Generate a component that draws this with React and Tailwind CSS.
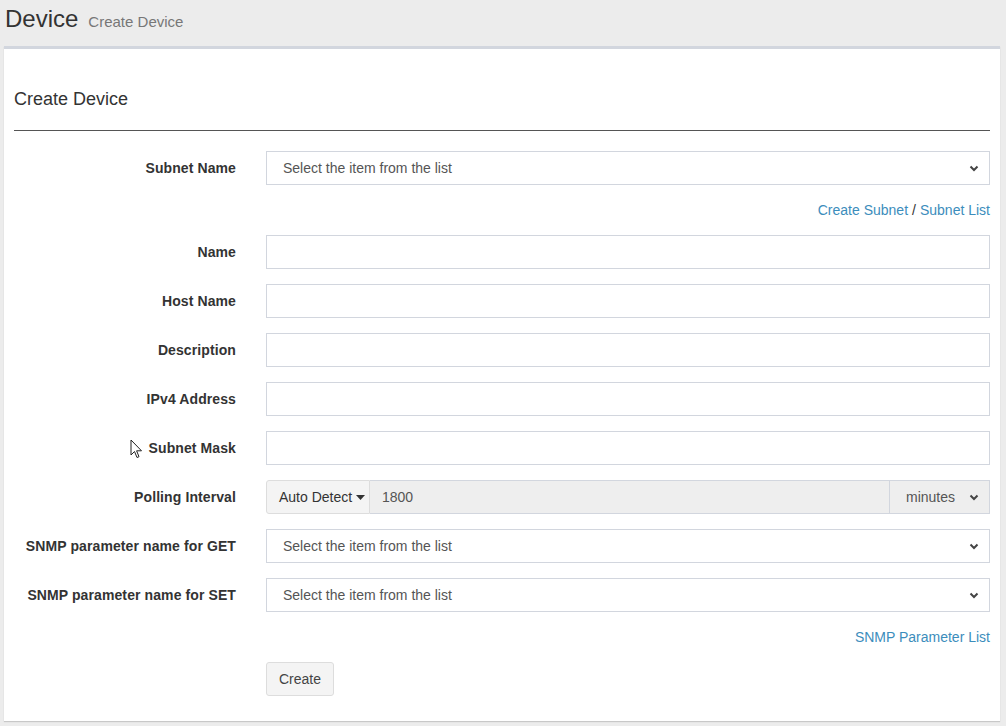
import React from 'react';

const Chevron = () => (
  <svg width="10" height="7" viewBox="0 0 10 7" className="pointer-events-none">
    <path d="M1.5 1.5 L5 5 L8.5 1.5" fill="none" stroke="#444" strokeWidth="2" />
  </svg>
);

const FakeSelect = ({ text }) => (
  <div className="flex-1 h-[34px] border border-[#d2d6de] bg-white flex items-center justify-between pl-4 pr-[10px] text-[14px] text-[#555]">
    <span>{text}</span>
    <Chevron />
  </div>
);

const TextInput = () => (
  <input type="text" className="flex-1 h-[34px] border border-[#d2d6de] bg-white px-3 text-[14px] text-[#555] outline-none" />
);

const Row = ({ label, children, extra }) => (
  <div className="flex items-center mb-[15px]">
    <label className="w-[222px] text-right font-bold text-[14px] tracking-[0.1px] text-[#333]">
      <span className="relative">
        {extra}
        {label}
      </span>
    </label>
    <div className="ml-[30px] flex-1 flex">{children}</div>
  </div>
);

const LinkRow = ({ children }) => (
  <div className="flex justify-end h-[20px] items-center mb-[15px] text-[14px] text-[#3c8dbc]">{children}</div>
);

const Cursor = () => (
  <svg width="13" height="20" viewBox="0 0 13 20" className="absolute left-[-19px] top-[-1px]">
    <path d="M1 1 L1 16 L4.5 12.5 L7 18.5 L9 17.7 L6.6 11.8 L11.5 11.8 Z" fill="#fff" stroke="#222" strokeWidth="1" strokeLinejoin="round" />
  </svg>
);

export default function App() {
  return (
    <div className="w-[1006px] h-[726px] bg-[#ececec] overflow-hidden" style={{ fontFamily: '"Liberation Sans", Arial, sans-serif' }}>
      {/* page header */}
      <div className="h-[46px] pl-[5px] pt-[5px] flex items-baseline">
        <h1 className="text-[24px] leading-[28px] text-[#333]">Device</h1>
        <small className="ml-[10px] text-[15px] text-[#777]">Create Device</small>
      </div>

      {/* box */}
      <div className="ml-[4px] w-[996px] h-[675px] bg-white border-t-[3px] border-[#d2d6de] shadow-[0_1px_1px_rgba(0,0,0,0.15)]">
        <div className="px-[10px]">
          <h3 className="pt-[39px] text-[18px] leading-[22px] text-[#333]">Create Device</h3>
          <div className="mt-[20px] mb-[20px] h-px bg-[#555]" />

          <Row label="Subnet Name">
            <FakeSelect text="Select the item from the list" />
          </Row>
          <LinkRow>
            <span>Create Subnet</span>
            <span className="text-[#333] mx-[4px]">/</span>
            <span>Subnet List</span>
          </LinkRow>

          <Row label="Name"><TextInput /></Row>
          <Row label="Host Name"><TextInput /></Row>
          <Row label="Description"><TextInput /></Row>
          <Row label="IPv4 Address"><TextInput /></Row>
          <Row label="Subnet Mask" extra={<Cursor />}><TextInput /></Row>

          <Row label="Polling Interval">
            <div className="flex-1 flex h-[34px] text-[14px]">
              <div className="w-[104px] bg-[#f4f4f4] border border-[#ddd] rounded-l-[3px] flex items-center pl-[12px] text-[#333]">
                Auto Detect
                <svg width="9" height="5" viewBox="0 0 9 5" className="ml-[4px]">
                  <path d="M0 0 L9 0 L4.5 5 Z" fill="#333" />
                </svg>
              </div>
              <div className="flex-1 bg-[#eee] border border-l-0 border-[#d2d6de] flex items-center pl-[12px] text-[#555]">1800</div>
              <div className="w-[100px] bg-[#eee] border border-l-0 border-[#d2d6de] flex items-center justify-between pl-[16px] pr-[10px] text-[#555]">
                <span>minutes</span>
                <Chevron />
              </div>
            </div>
          </Row>

          <Row label="SNMP parameter name for GET">
            <FakeSelect text="Select the item from the list" />
          </Row>
          <Row label="SNMP parameter name for SET">
            <FakeSelect text="Select the item from the list" />
          </Row>
          <LinkRow>SNMP Parameter List</LinkRow>

          <div className="pl-[252px]">
            <button className="h-[34px] px-[12px] bg-[#f4f4f4] border border-[#ddd] rounded-[3px] text-[14px] text-[#444]">Create</button>
          </div>
        </div>
      </div>
    </div>
  );
}
